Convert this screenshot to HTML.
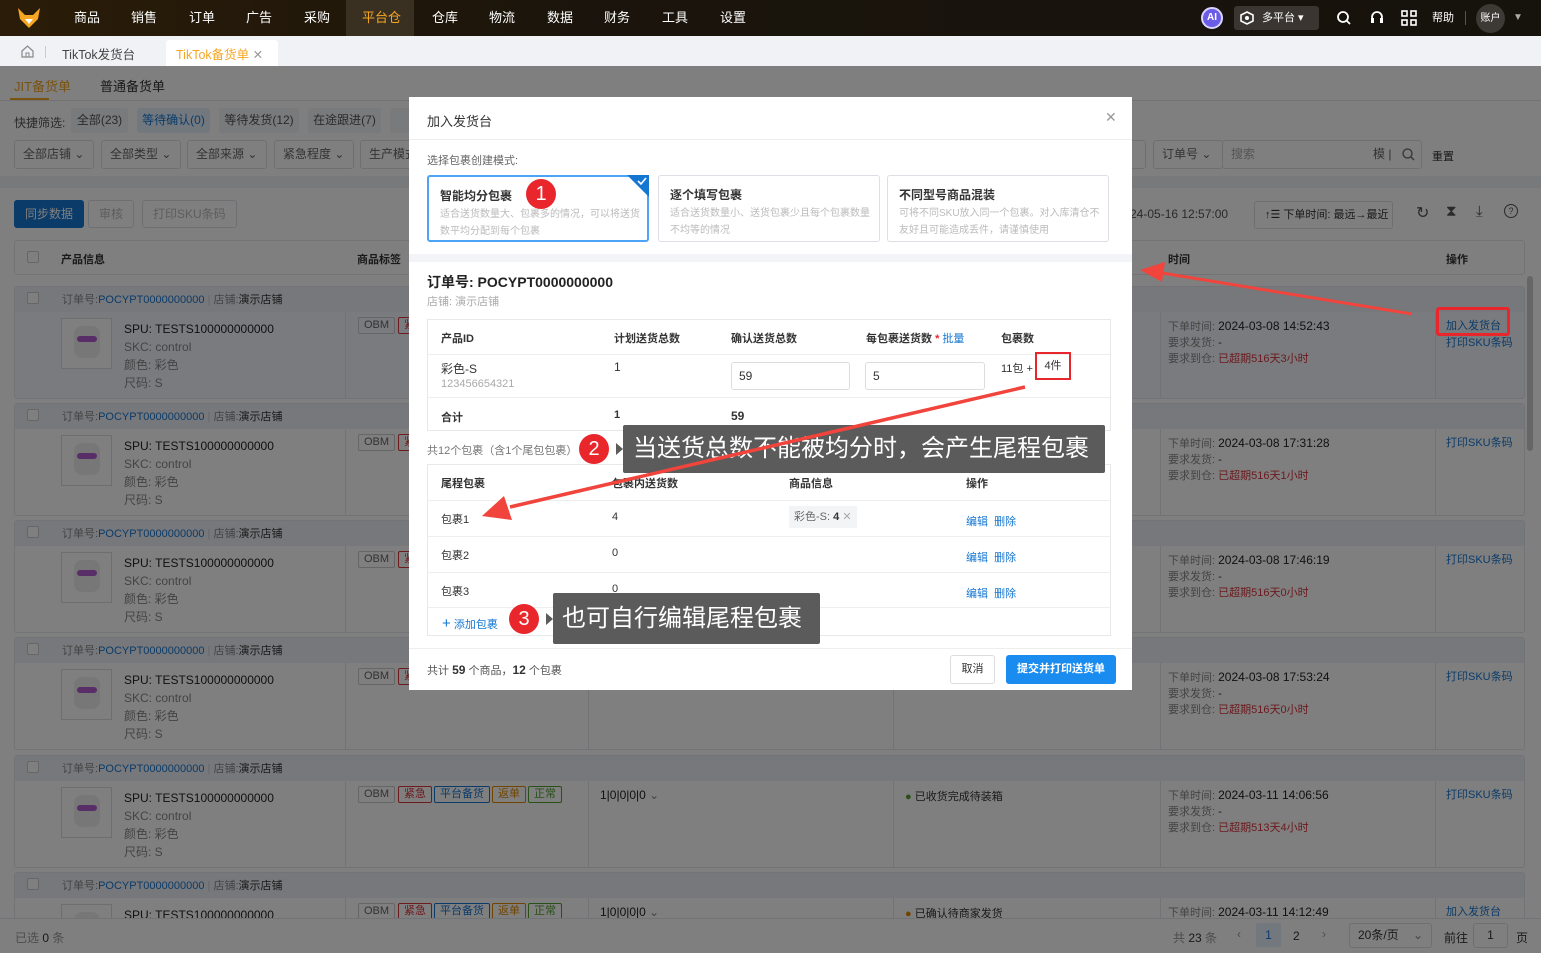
<!DOCTYPE html>
<html><head><meta charset="utf-8">
<style>
*{box-sizing:border-box;margin:0;padding:0}
html{width:1541px;height:953px;overflow:hidden}
body{width:1541px;height:953px;overflow:hidden;position:relative;font-family:"Liberation Sans","Noto Sans CJK SC",sans-serif;font-size:12px;color:#333;background:#fff}
.a{position:absolute;white-space:nowrap}
.top{left:0;top:0;width:1541px;height:36px;background:linear-gradient(90deg,#2a1c08 0%,#1a140c 40%,#16120c 100%)}
.nav{top:0;height:36px;line-height:36px;color:#fff;font-size:13px}
.tabs{left:0;top:36px;width:1541px;height:30px;background:#f0f2f5}
.btn{border:1px solid #dcdfe6;border-radius:3px;background:#fff;color:#666;height:28px;line-height:26px;padding:0 10px;font-size:12px}
.sel{border:1px solid #dcdfe6;border-radius:3px;background:#fff;color:#666;height:29px;line-height:27px;padding:0 8px;font-size:12px}
.tag{border:1px solid #ccc;border-radius:2px;height:17px;line-height:15px;padding:0 5px;font-size:11px;top:6px}
.gray{color:#888}
.blue{color:#1677d2}
.red{color:#d9363e}
.ov{left:0;top:66px;width:1541px;height:887px;background:rgba(0,0,0,.5)}
.modal{left:409px;top:97px;width:723px;height:593px;background:#fff}
.m{position:absolute;white-space:nowrap}
.card{border:1px solid #dcdfe6;border-radius:3px;width:222px;height:67px;top:78px}
.card b{position:absolute;left:11px;top:10px;font-size:12px;color:#333}
.card span{position:absolute;left:11px;top:29px;font-size:10px;color:#bbb;line-height:17px;white-space:normal;width:205px}
.th{font-weight:bold;font-size:11px;color:#333}
.circ{width:30px;height:30px;border-radius:50%;background:#e8262b;color:#fff;font-size:20px;text-align:center;line-height:30px}
.tip{background:#5b5b5b;color:#fff;font-size:24px;border-radius:2px}
#g{position:absolute;left:0;top:0;width:1541px;height:918px;overflow:hidden}
</style></head><body>

<div class="a top"></div>
<svg class="a" style="left:17px;top:7px" width="24" height="22" viewBox="0 0 24 22"><path d="M1 1 L8 8 L16 8 L23 1 L21 12 L12 21 L3 12Z" fill="#f5a623"/><path d="M8 12 L12 17 L16 12Z" fill="#fff"/></svg>
<div class="a" style="left:346px;top:0;width:68px;height:36px;background:#3a3022"></div>
<div class="a nav" style="left:74px">商品</div>
<div class="a nav" style="left:131px">销售</div>
<div class="a nav" style="left:189px">订单</div>
<div class="a nav" style="left:246px">广告</div>
<div class="a nav" style="left:304px">采购</div>
<div class="a nav" style="left:362px;color:#f5a623">平台仓</div>
<div class="a nav" style="left:432px">仓库</div>
<div class="a nav" style="left:489px">物流</div>
<div class="a nav" style="left:547px">数据</div>
<div class="a nav" style="left:604px">财务</div>
<div class="a nav" style="left:662px">工具</div>
<div class="a nav" style="left:720px">设置</div>
<div class="a" style="left:1201px;top:7px;width:22px;height:22px;border-radius:50%;background:#6b5ce7;border:2px solid #d8d4ff;color:#fff;font-size:10px;font-weight:bold;text-align:center;line-height:18px">AI</div>
<div class="a" style="left:1234px;top:6px;width:85px;height:24px;background:#3a3530;border-radius:3px;color:#fff;font-size:11px;line-height:24px;padding-left:28px">多平台 ▾</div>
<svg class="a" style="left:1240px;top:11px" width="14" height="14" viewBox="0 0 14 14"><path d="M7 1 L13 4 L13 10 L7 13 L1 10 L1 4Z" fill="none" stroke="#fff" stroke-width="1.6"/><circle cx="7" cy="7" r="2" fill="#fff"/></svg>
<svg class="a" style="left:1336px;top:10px" width="16" height="16" viewBox="0 0 16 16"><circle cx="7" cy="7" r="5" fill="none" stroke="#fff" stroke-width="1.8"/><path d="M11 11 L14 14" stroke="#fff" stroke-width="1.8"/></svg>
<svg class="a" style="left:1369px;top:9px" width="16" height="18" viewBox="0 0 16 18"><path d="M4 11 A5 5 0 1 1 12 11" fill="none" stroke="#fff" stroke-width="1.8"/><rect x="2" y="9" width="3" height="5" fill="#fff"/><rect x="11" y="9" width="3" height="5" fill="#fff"/></svg>
<svg class="a" style="left:1401px;top:10px" width="16" height="16" viewBox="0 0 16 16"><g fill="none" stroke="#fff" stroke-width="1.6"><rect x="1" y="1" width="5" height="5"/><rect x="10" y="1" width="5" height="5"/><rect x="1" y="10" width="5" height="5"/><rect x="10" y="10" width="5" height="5"/></g></svg>
<div class="a" style="left:1432px;top:0;line-height:36px;color:#fff;font-size:11px">帮助</div>
<div class="a" style="left:1465px;top:11px;width:1px;height:14px;background:#555"></div>
<div class="a" style="left:1476px;top:4px;width:29px;height:29px;border-radius:50%;background:#3d3a36;color:#fff;font-size:10px;text-align:center;line-height:29px">账户</div>
<div class="a" style="left:1513px;top:0;line-height:36px;color:#aaa;font-size:10px">▼</div>

<div class="a tabs"></div>
<svg class="a" style="left:21px;top:45px" width="13" height="13" viewBox="0 0 13 13"><path d="M1 6 L6.5 1 L12 6 L12 12 L1 12Z" fill="none" stroke="#888" stroke-width="1.2"/><rect x="5" y="8" width="3" height="4" fill="none" stroke="#888"/></svg>
<div class="a" style="left:45px;top:46px;width:1px;height:12px;background:#ccc"></div>
<div class="a" style="left:62px;top:44px;font-size:12.5px;color:#444">TikTok发货台</div>
<div class="a" style="left:166px;top:40px;width:112px;height:26px;background:#fff;border-radius:3px 3px 0 0"></div>
<div class="a" style="left:176px;top:44px;font-size:12.5px;color:#f5a623">TikTok备货单 <span style="color:#999">✕</span></div>

<div class="a" style="left:14px;top:76px;font-size:13px;color:#f5a623">JIT备货单</div>
<div class="a" style="left:10px;top:98px;width:39px;height:2px;background:#f5a623"></div>
<div class="a" style="left:100px;top:76px;font-size:13px;color:#333">普通备货单</div>
<div class="a" style="left:0;top:100px;width:1541px;height:1px;background:#e4e4e4"></div>
<div class="a" style="left:14px;top:114px;color:#555">快捷筛选:</div>
<div class="a" style="left:71px;top:108px;width:57px;height:25px;background:#f2f4f7;border-radius:3px;color:#555;line-height:25px;text-align:center">全部(23)</div>
<div class="a" style="left:137px;top:108px;width:73px;height:25px;background:#e6f0fc;border-radius:3px;color:#1677d2;line-height:25px;text-align:center">等待确认(0)</div>
<div class="a" style="left:219px;top:108px;width:80px;height:25px;background:#f2f4f7;border-radius:3px;color:#555;line-height:25px;text-align:center">等待发货(12)</div>
<div class="a" style="left:308px;top:108px;width:73px;height:25px;background:#f2f4f7;border-radius:3px;color:#555;line-height:25px;text-align:center">在途跟进(7)</div>
<div class="a" style="left:390px;top:108px;width:30px;height:25px;background:#f2f4f7;border-radius:3px"></div>
<div class="a sel" style="left:14px;top:140px;width:80px">全部店铺 ⌄</div>
<div class="a sel" style="left:101px;top:140px;width:80px">全部类型 ⌄</div>
<div class="a sel" style="left:187px;top:140px;width:80px">全部来源 ⌄</div>
<div class="a sel" style="left:274px;top:140px;width:80px">紧急程度 ⌄</div>
<div class="a sel" style="left:360px;top:140px;width:60px">生产模式</div>
<div class="a sel" style="left:1100px;top:140px;width:46px"></div>
<div class="a sel" style="left:1153px;top:140px;width:70px">订单号 ⌄</div>
<div class="a sel" style="left:1222px;top:140px;width:200px;color:#aaa">搜索<span style="position:absolute;left:150px;color:#666">模 | </span></div>
<svg class="a" style="left:1402px;top:148px" width="13" height="13" viewBox="0 0 13 13"><circle cx="5.5" cy="5.5" r="4.5" fill="none" stroke="#666" stroke-width="1.3"/><path d="M9 9 L12 12" stroke="#666" stroke-width="1.3"/></svg>
<div class="a" style="left:1432px;top:148px;color:#333;font-size:11px">重置</div>
<div class="a" style="left:0;top:176px;width:1541px;height:12px;background:#f0f2f5"></div>
<div class="a btn" style="left:14px;top:200px;background:#1677d2;border-color:#1677d2;color:#fff">同步数据</div>
<div class="a btn" style="left:88px;top:200px;color:#bbb">审核</div>
<div class="a btn" style="left:142px;top:200px;color:#bbb">打印SKU条码</div>
<div class="a" style="left:1130px;top:207px;color:#555">24-05-16 12:57:00</div>
<div class="a btn" style="left:1254px;top:201px;width:139px;color:#333;font-size:11px">↑☰ 下单时间: 最远→最近</div>
<div class="a" style="left:1416px;top:203px;font-size:16px;color:#555">↻</div>
<div class="a" style="left:1446px;top:203px;font-size:15px;color:#555">⧗</div>
<div class="a" style="left:1476px;top:203px;font-size:15px;color:#555">⤓</div>
<div class="a" style="left:1504px;top:204px;width:14px;height:14px;border:1.3px solid #555;border-radius:50%;font-size:9px;text-align:center;line-height:12px;color:#555">?</div>

<div class="a" style="left:14px;top:240px;width:1511px;height:35px;border:1px solid #e4e7ed;border-radius:3px;background:#fff"></div>
<div class="a" style="left:27px;top:251px;width:12px;height:12px;border:1px solid #ccc;border-radius:2px;background:#fff"></div>
<div class="a th" style="left:61px;top:251px">产品信息</div>
<div class="a th" style="left:357px;top:251px">商品标签</div>
<div class="a th" style="left:1168px;top:251px">时间</div>
<div class="a th" style="left:1446px;top:251px">操作</div>

<div id="g"></div>
<script>
var d=[[286,'14:52:43','2024-03-08','516天3小时',1,1,'#f2f6fc'],[403,'17:31:28','2024-03-08','516天1小时',0,1,'#fff'],[520,'17:46:19','2024-03-08','516天0小时',0,1,'#fff'],[637,'17:53:24','2024-03-08','516天0小时',0,1,'#fff'],[755,'14:06:56','2024-03-11','513天4小时',0,1,'#fff'],[872,'14:12:49','2024-03-11','',1,0,'#fff']];
var h='';
d.forEach(function(r,i){var y=r[0];
h+='<div class="a" style="left:14px;top:'+y+'px;width:1511px;height:113px;border:1px solid #e4e7ed;border-radius:3px;background:'+r[6]+'"></div>';
h+='<div class="a" style="left:15px;top:'+(y+1)+'px;width:1509px;height:25px;background:#eef1f6"></div>';
h+='<div class="a" style="left:27px;top:'+(y+6)+'px;width:12px;height:12px;border:1px solid #ccc;border-radius:2px;background:#fff"></div>';
h+='<div class="a" style="left:62px;top:'+(y+5)+'px;font-size:11px"><span class="gray">订单号:</span><span class="blue">POCYPT0000000000</span> <span style="color:#ccc">|</span> <span class="gray">店铺:</span>演示店铺</div>';
var p=y+26;
['345','588','893','1160','1435'].forEach(function(x){h+='<div class="a" style="left:'+x+'px;top:'+p+'px;width:1px;height:86px;background:#e4e7ed"></div>'});
h+='<div class="a" style="left:61px;top:'+(p+6)+'px;width:51px;height:51px;border:1px solid #ddd;background:#fff"></div>';
h+='<div class="a" style="left:74px;top:'+(p+14)+'px;width:26px;height:32px;border-radius:8px;background:#eee"></div><div class="a" style="left:77px;top:'+(p+24)+'px;width:20px;height:6px;border-radius:3px;background:#b05ad0"></div>';
h+='<div class="a" style="left:124px;top:'+(p+8)+'px;font-size:12px;color:#222;line-height:18px">SPU: TESTS100000000000<br><span class="gray">SKC: control<br>颜色: 彩色<br>尺码: S</span></div>';
h+='<div class="a tag" style="left:358px;top:'+(p+5)+'px;color:#666">OBM</div><div class="a tag" style="left:398px;top:'+(p+5)+'px;color:#d9363e;border-color:#d9363e">紧急</div><div class="a tag" style="left:434px;top:'+(p+5)+'px;color:#1677d2;border-color:#1677d2">平台备货</div><div class="a tag" style="left:492px;top:'+(p+5)+'px;color:#e08a00;border-color:#e08a00">返单</div><div class="a tag" style="left:528px;top:'+(p+5)+'px;color:#52a030;border-color:#52a030">正常</div>';
h+='<div class="a" style="left:600px;top:'+(p+7)+'px;color:#222">1|0|0|0|0 <span class="gray">⌄</span></div>';
h+='<div class="a" style="left:905px;top:'+(p+7)+'px;color:#333;font-size:11px"><span style="color:'+(i==5?'#e08a00':'#52a030')+'">●</span> '+(i==5?'已确认待商家发货':'已收货完成待装箱')+'</div>';
h+='<div class="a" style="left:1168px;top:'+(p+6)+'px;line-height:16px;font-size:11px"><span class="gray">下单时间: </span><span style="color:#222;font-size:12px">'+r[2]+' '+r[1]+'</span><br><span class="gray">要求发货: </span>-<br><span class="gray">要求到仓: </span><span class="red">已超期'+r[3]+'</span></div>';
h+='<div class="a blue" style="left:1446px;top:'+(p+6)+'px;line-height:17px;font-size:11px">'+(r[4]?'加入发货台<br>':'')+(r[5]?'打印SKU条码':'')+'</div>';
});
document.getElementById('g').innerHTML=h;
</script>
<div class="a" style="left:0;top:918px;width:1541px;height:35px;background:#fff;border-top:1px solid #e4e7ed"></div>
<div class="a" style="left:15px;top:929px;color:#999">已选 <span style="color:#333">0</span> 条</div>
<div class="a" style="left:1173px;top:929px;color:#999">共 <span style="color:#333">23</span> 条</div>
<div class="a" style="left:1237px;top:927px;color:#999">‹</div>
<div class="a" style="left:1256px;top:923px;width:25px;height:24px;background:#e6f0fc;color:#1677d2;text-align:center;line-height:24px;border-radius:2px">1</div>
<div class="a" style="left:1293px;top:929px;color:#333">2</div>
<div class="a" style="left:1322px;top:927px;color:#999">›</div>
<div class="a sel" style="left:1349px;top:923px;width:83px;height:25px;line-height:23px;color:#333">20条/页 <span style="position:absolute;right:8px;color:#888">⌄</span></div>
<div class="a" style="left:1444px;top:929px;color:#333">前往</div>
<div class="a sel" style="left:1473px;top:923px;width:35px;height:25px;line-height:23px;text-align:center;color:#333">1</div>
<div class="a" style="left:1516px;top:929px;color:#333">页</div>
<div class="a" style="left:1527px;top:276px;width:6px;height:175px;background:#ccc;border-radius:3px"></div>

<div class="a ov"></div>

<div class="a modal">
<div class="m" style="left:18px;top:14px;font-size:13px;color:#333">加入发货台</div>
<div class="m" style="left:696px;top:12px;font-size:14px;color:#999">✕</div>
<div class="m" style="left:0;top:42px;width:723px;height:1px;background:#eee"></div>
<div class="m" style="left:18px;top:55px;font-size:11px;color:#666">选择包裹创建模式:</div>
<div class="m card" style="left:18px;border:2px solid #4da3f5"><b>智能均分包裹</b><span>适合送货数量大、包裹多的情况，可以将送货数平均分配到每个包裹</span></div>
<svg class="m" style="left:218px;top:78px" width="22" height="22"><path d="M0 0 H22 V22Z" fill="#1677d2"/><path d="M11 6 L14 9 L19 3" stroke="#fff" stroke-width="1.6" fill="none"/></svg>
<div class="m card" style="left:249px"><b>逐个填写包裹</b><span>适合送货数量小、送货包裹少且每个包裹数量不均等的情况</span></div>
<div class="m card" style="left:478px"><b>不同型号商品混装</b><span>可将不同SKU放入同一个包裹。对入库清仓不友好且可能造成丢件，请谨慎使用</span></div>
<div class="m" style="left:0;top:157px;width:723px;height:8px;background:#f3f4f7"></div>
<div class="m" style="left:18px;top:175px;font-size:14px;font-weight:bold;color:#222">订单号: POCYPT0000000000</div>
<div class="m" style="left:18px;top:196px;font-size:11px;color:#aaa">店铺: 演示店铺</div>
<div class="m" style="left:18px;top:222px;width:684px;height:112px;border:1px solid #e8e8e8"></div>
<div class="m" style="left:19px;top:257px;width:682px;height:1px;background:#eee"></div>
<div class="m" style="left:19px;top:300px;width:682px;height:1px;background:#eee"></div>
<div class="m th" style="left:32px;top:233px">产品ID</div>
<div class="m th" style="left:205px;top:233px">计划送货总数</div>
<div class="m th" style="left:322px;top:233px">确认送货总数</div>
<div class="m th" style="left:457px;top:233px">每包裹送货数 <span style="color:#e8262b">*</span> <span style="color:#1677d2;font-weight:normal">批量</span></div>
<div class="m th" style="left:592px;top:233px">包裹数</div>
<div class="m" style="left:32px;top:263px;font-size:12px;color:#333">彩色-S</div>
<div class="m" style="left:32px;top:281px;font-size:11px;color:#aaa">123456654321</div>
<div class="m" style="left:205px;top:263px;color:#333">1</div>
<div class="m" style="left:322px;top:265px;width:119px;height:28px;border:1px solid #ddd;border-radius:3px;padding-left:7px;line-height:26px;font-size:12px">59</div>
<div class="m" style="left:456px;top:265px;width:120px;height:28px;border:1px solid #ddd;border-radius:3px;padding-left:7px;line-height:26px;font-size:12px">5</div>
<div class="m" style="left:592px;top:263px;color:#333;font-size:11px">11包 + </div>
<div class="m" style="left:626px;top:255px;width:36px;height:28px;border:2px solid #e8262b;font-size:11px;line-height:24px;text-align:center">4件</div>
<div class="m th" style="left:32px;top:312px">合计</div>
<div class="m th" style="left:205px;top:312px">1</div>
<div class="m th" style="left:322px;top:312px;font-size:12px">59</div>
<div class="m" style="left:18px;top:345px;font-size:11px;color:#777">共12个包裹（含1个尾包包裹）</div>
<div class="m" style="left:18px;top:367px;width:684px;height:172px;border:1px solid #e8e8e8"></div>
<div class="m" style="left:19px;top:403px;width:682px;height:1px;background:#eee"></div>
<div class="m" style="left:19px;top:439px;width:682px;height:1px;background:#eee"></div>
<div class="m" style="left:19px;top:475px;width:682px;height:1px;background:#eee"></div>
<div class="m" style="left:19px;top:510px;width:682px;height:1px;background:#eee"></div>
<div class="m th" style="left:32px;top:378px">尾程包裹</div>
<div class="m th" style="left:203px;top:378px">包裹内送货数</div>
<div class="m th" style="left:380px;top:378px">商品信息</div>
<div class="m th" style="left:557px;top:378px">操作</div>
<div class="m" style="left:32px;top:414px;font-size:11px">包裹1</div>
<div class="m" style="left:203px;top:414px;font-size:11px">4</div>
<div class="m" style="left:380px;top:409px;padding:0 5px;height:22px;line-height:22px;background:#f3f4f6;font-size:11px;color:#666">彩色-S: <b style="color:#333">4</b> <span style="color:#aaa">✕</span></div>
<div class="m" style="left:557px;top:416px;font-size:11px;color:#1677d2">编辑&nbsp;&nbsp;删除</div>
<div class="m" style="left:32px;top:450px;font-size:11px">包裹2</div>
<div class="m" style="left:203px;top:450px;font-size:11px">0</div>
<div class="m" style="left:557px;top:452px;font-size:11px;color:#1677d2">编辑&nbsp;&nbsp;删除</div>
<div class="m" style="left:32px;top:486px;font-size:11px">包裹3</div>
<div class="m" style="left:203px;top:486px;font-size:11px">0</div>
<div class="m" style="left:557px;top:488px;font-size:11px;color:#1677d2">编辑&nbsp;&nbsp;删除</div>
<div class="m" style="left:33px;top:518px;font-size:11px;color:#1677d2"><span style="font-size:15px">+</span> 添加包裹</div>
<div class="m" style="left:0;top:551px;width:723px;height:1px;background:#eee"></div>
<div class="m" style="left:18px;top:565px;font-size:11px;color:#555">共计 <b style="color:#333;font-size:12px">59</b> 个商品，<b style="color:#333;font-size:12px">12</b> 个包裹</div>
<div class="m" style="left:541px;top:558px;width:45px;height:29px;border:1px solid #ddd;border-radius:3px;text-align:center;line-height:27px;font-size:11px">取消</div>
<div class="m" style="left:597px;top:558px;width:110px;height:29px;background:#1a8cf0;border-radius:3px;text-align:center;line-height:29px;font-size:11px;color:#fff;font-weight:bold">提交并打印送货单</div>
</div>

<div class="a" style="left:1436px;top:307px;width:74px;height:29px;border:3px solid #e8262b;border-radius:3px"></div>
<div class="a tip" style="left:623px;top:425px;width:482px;height:48px;line-height:48px;padding-left:10px">当送货总数不能被均分时，会产生尾程包裹</div>
<div class="a tip" style="left:553px;top:593px;width:267px;height:51px;line-height:51px;padding-left:9px">也可自行编辑尾程包裹</div>
<svg class="a" style="left:0;top:0" width="1541" height="953">
<path d="M616 443 L623 449 L616 455Z" fill="#5b5b5b"/>
<path d="M546 613 L553 619 L546 625Z" fill="#5b5b5b"/>
<path d="M1412 314 L1162 273" stroke="#f0443c" stroke-width="3"/>
<path d="M1140 270 L1165 262 L1162 282Z" fill="#f0443c"/>
<path d="M1025 387 L510 507" stroke="#f0443c" stroke-width="3.5"/>
<path d="M482 516 L504 496 L512 520Z" fill="#f0443c"/>
</svg>
<div class="a circ" style="left:526px;top:179px">1</div>
<div class="a circ" style="left:579px;top:434px">2</div>
<div class="a circ" style="left:509px;top:604px">3</div>
</body></html>
